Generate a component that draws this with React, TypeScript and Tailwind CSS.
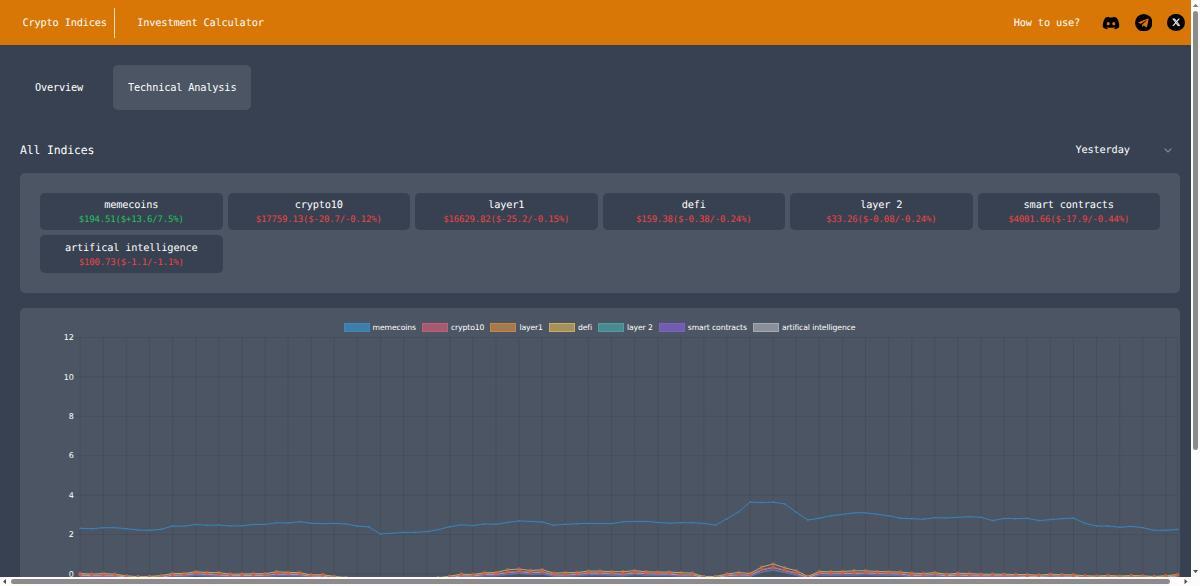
import React from "react";
import { FaDiscord, FaXTwitter } from "react-icons/fa6";

type Index = { name: string; value: string; up?: boolean };

const indices: Index[] = [
  { name: "memecoins", value: "$194.51($+13.6/7.5%)", up: true },
  { name: "crypto10", value: "$17759.13($-20.7/-0.12%)" },
  { name: "layer1", value: "$16629.82($-25.2/-0.15%)" },
  { name: "defi", value: "$159.38($-0.38/-0.24%)" },
  { name: "layer 2", value: "$33.26($-0.08/-0.24%)" },
  { name: "smart contracts", value: "$4001.66($-17.9/-0.44%)" },
  { name: "artifical intelligence", value: "$100.73($-1.1/-1.1%)" },
];

const legend = [
  { name: "memecoins", swatch: "bg-[#3f7dab] border-[#3f86bd]" },
  { name: "crypto10", swatch: "bg-[#a55a70] border-[#c25f78]" },
  { name: "layer1", swatch: "bg-[#a57a4f] border-[#c2854a]" },
  { name: "defi", swatch: "bg-[#a5925a] border-[#ccae5c]" },
  { name: "layer 2", swatch: "bg-[#4b8a91] border-[#4c9fa2]" },
  { name: "smart contracts", swatch: "bg-[#725cb0] border-[#7f60c9]" },
  { name: "artifical intelligence", swatch: "bg-[#8a9099] border-[#a5a9b0]" },
];

const X0 = 60.2;
const STEP = 11.55;
const TOP = 29.5;
const UNIT = 19.7;

// Vertical positions inside the chart, one sample every 15 minutes.
const memecoins = [
  220.3, 220.7, 219.7, 219.7, 220.7, 222, 222.3, 221.3, 218, 218.2, 216.5, 217.3, 217, 218, 217.8, 216.4, 216.4, 214.8,
  215, 213.7, 215.3, 215.7, 215.4, 216, 218, 219, 226, 225.3, 224.4, 224.3, 223.6, 221.6, 218.7, 216.8, 217.5, 216,
  216.3, 214.4, 212.9, 213.4, 214, 217.2, 216.3, 215.7, 215.4, 215.6, 215.6, 213.8, 213.4, 213.4, 214.4, 215.2, 214.7,
  214.7, 215.4, 217.2, 210.7, 204, 194.1, 194.6, 194.1, 196, 204.3, 212, 210.3, 207.7, 206.4, 204.8, 204.8, 206.3,
  207.7, 210.3, 210.7, 211.3, 209.7, 210, 209.3, 208.7, 209.3, 212.6, 210.4, 210.7, 210.3, 212.6, 211.6, 210.7, 210.1,
  215.3, 218, 218, 219.3, 218.4, 219.7, 222.3, 222.3, 221.4,
];
const upper = [
  265, 265.6, 265, 265.7, 267.3, 268.2, 268, 267, 265, 265, 263.3, 264, 264.2, 265.6, 265.5, 265.2, 265.2, 263.3, 263.9,
  264.2, 266.3, 266.2, 267.9, 269, 270, 271, 272, 272, 272, 271.5, 270.3, 269.3, 267.6, 265.7, 266, 264.3, 264, 261.3,
  260.6, 262, 261.3, 264.6, 264.2, 264, 262.6, 262.6, 263.2, 263.2, 262.2, 263.3, 263.6, 263.6, 264.2, 264.6, 268, 268,
  265.5, 264, 265, 258.6, 255.5, 259.3, 262.3, 267.8, 263, 263.3, 263, 262.3, 262.3, 263, 263.3, 263.6, 264.7, 265,
  264.2, 265.7, 264.8, 265, 265.7, 265.7, 265.7, 266, 266, 266.6, 265.7, 266.2, 266.3, 267.2, 267.6, 267, 267.6, 267,
  267.3, 268, 267.2, 266,
].map((v) => v + 0.5);
const shift = (values: number[], d: number, k: number) =>
  values.map((v, i) => v + d + Math.max(0, 268 - v) * k + (i % 5 === 2 ? 0.5 : 0));

const points = (values: number[]) => values.map((v, i) => `${(X0 + i * STEP).toFixed(1)},${v.toFixed(1)}`).join(" ");

function Chart() {
  const lower = shift(upper, 0.3, 0.24);
  return (
    <svg width="1160" height="269" viewBox="0 0 1160 269" className="block">
      <g stroke="#000" strokeOpacity="0.1" strokeWidth="0.8">
        {Array.from({ length: 48 }, (_, i) => (
          <line key={i} x1={X0 + i * STEP * 2} x2={X0 + i * STEP * 2} y1={TOP} y2="269" />
        ))}
        <line x1="1157.5" x2="1157.5" y1={TOP} y2="269" />
        {Array.from({ length: 7 }, (_, i) => (
          <line key={i} x1="55" x2="1157.5" y1={TOP + i * UNIT * 2} y2={TOP + i * UNIT * 2} />
        ))}
      </g>
      <g
        fill="#fff"
        fontSize="8"
        fontFamily="DejaVu Sans, sans-serif"
        textAnchor="end"
        textRendering="geometricPrecision"
      >
        {[12, 10, 8, 6, 4, 2, 0].map((n, i) => (
          <text key={n} x="53.7" y={TOP + 2.6 + i * UNIT * 2}>
            {n}
          </text>
        ))}
      </g>
      <g fill="none" strokeLinejoin="round" strokeWidth="1">
        <polyline points={points(shift(upper, 2.4, 0.32))} stroke="#4c9fa2" strokeOpacity="0.6" />
        <polyline points={points(shift(upper, 1.9, 0.3))} stroke="#7d63c6" />
        <polyline points={points(shift(upper, 1.1, 0.2))} stroke="#c9ccd2" strokeOpacity="0.8" />
        <polyline points={points(lower)} stroke="#c9605f" />
        <polyline points={points(upper)} stroke="#c4ab66" />
        <polyline points={points(memecoins)} stroke="#3a84bd" />
      </g>
      <g fill="#b8604c" stroke="#dc5a45" strokeOpacity="0.85" strokeWidth="0.6">
        {lower.map((v, i) => (
          <circle key={i} cx={X0 + i * STEP} cy={v} r="1.5" />
        ))}
      </g>
      <g fill="none" stroke="#d0784a" strokeWidth="0.6">
        {upper.map((v, i) => (
          <circle key={i} cx={X0 + i * STEP} cy={v} r="1.4" />
        ))}
      </g>
      <g fill="#3a7cb0">
        {memecoins.map((v, i) => (
          <circle key={i} cx={X0 + i * STEP} cy={v} r="1" />
        ))}
      </g>
    </svg>
  );
}

function TelegramIcon() {
  return (
    <svg width="17.5" height="17.5" viewBox="0 0 24 24" className="ml-[15px]">
      <circle cx="12" cy="12" r="12" fill="#000" />
      <path
        fill="#d97706"
        d="M17.9 6.2 4.9 11.3c-.8.3-.8.9-.1 1.1l3.3 1 7.4-4.7c.4-.2.7-.1.4.2l-6 5.5-.3 3.3c.4 0 .5-.2.8-.4l1.6-1.6 3.3 2.4c.6.4 1.1.2 1.2-.5l2.2-10.3c.2-.9-.3-1.4-.8-1.1Z"
      />
    </svg>
  );
}

function Header() {
  return (
    <header className="flex h-[45px] shrink-0 items-center bg-[#d97706] pl-[22.5px] pr-[6px]">
      <a className="flex h-[30px] items-center border-r border-[#f9e4cc] pr-[7.5px] pt-px">Crypto Indices</a>
      <a className="ml-[22px] pt-px">Investment Calculator</a>
      <nav className="ml-auto flex items-center">
        <a className="mr-[21.5px] pt-px">How to use?</a>
        <FaDiscord className="h-[18px] w-[18px] text-black" />
        <TelegramIcon />
        <span className="ml-[15px] flex h-[17.5px] w-[17.5px] items-center justify-center rounded-full bg-black">
          <FaXTwitter className="h-[8.5px] w-[8.5px] stroke-white stroke-[20] text-white" />
        </span>
      </nav>
    </header>
  );
}

export default function App() {
  return (
    <div className="grid h-[586px] w-[1200px] grid-cols-[1190.5px_9.5px] grid-rows-[576.5px_9.5px] overflow-hidden bg-[#fcfcfc] font-['DejaVu_Sans_Mono',monospace] text-[10.3px] tracking-[-0.18px] leading-[15px] text-white [text-rendering:geometricPrecision]">
      <div className="flex flex-col overflow-hidden bg-[#374151]">
        <Header />
        <div className="flex shrink-0 px-5 pt-5">
          <button className="h-[45px] w-[78px]">Overview</button>
          <button className="ml-[15px] h-[45px] w-[138px] rounded-[5px] bg-[#4b5563] pl-[0.5px]">Technical Analysis</button>
        </div>
        <div className="mt-[30px] flex h-[20px] w-[1180px] shrink-0 items-center justify-between pl-5">
          <h1 className="text-[11.5px]">All Indices</h1>
          <div className="flex w-[104.5px] items-center justify-between pr-[8.5px]">
            <span>Yesterday</span>
            <svg width="8" height="5" viewBox="0 0 8 5" fill="none" stroke="#868d98" strokeWidth="1.1">
              <path d="M0.6 0.6 4 4 7.4 0.6" />
            </svg>
          </div>
        </div>
        <section className="mx-5 mt-[12.5px] grid h-[120px] w-[1160px] shrink-0 grid-cols-6 content-start gap-[5px] rounded-[5px] bg-[#4b5563] p-5">
          {indices.map((item) => (
            <div key={item.name} className="flex h-[37.5px] flex-col items-center rounded-[5px] bg-[#374151] pt-[5.5px]">
              <span className="leading-[15px]">{item.name}</span>
              <span
                className={
                  item.up
                    ? "text-[9px] tracking-[-0.16px] leading-[14px] text-[#22c55e]"
                    : "text-[9px] tracking-[-0.16px] leading-[14px] text-[#ef4444]"
                }
              >
                {item.value}
              </span>
            </div>
          ))}
        </section>
        <section className="mx-5 mt-[15px] h-[400px] w-[1160px] shrink-0 rounded-t-[5px] bg-[#4b5563]">
          <div className="-mb-[29px] flex h-[29px] justify-center gap-[6px] pt-[15px] pr-[1px] font-['DejaVu_Sans',sans-serif] text-[7.7px] tracking-[-0.11px] leading-[9px]">
            {legend.map((l) => (
              <div key={l.name} className="flex h-[9px] items-center gap-[3px]">
                <span className={`h-[9px] w-[26px] border ${l.swatch}`} />
                <span>{l.name}</span>
              </div>
            ))}
          </div>
          <Chart />
        </section>
      </div>
      <div className="flex flex-col items-center">
        <svg width="9" height="11" viewBox="0 0 9 11" className="shrink-0">
          <path d="M1.8 7 4.6 3.8 7.4 7Z" fill="#808080" />
        </svg>
        <div className="h-[439px] w-[5.5px] rounded-full bg-[#8b8b8b]" />
        <svg width="9" height="11" viewBox="0 0 9 11" className="mt-auto shrink-0">
          <path d="M2 4 4.6 7 7.2 4Z" fill="#505050" />
        </svg>
      </div>
      <div className="flex items-center">
        <svg width="11" height="9" viewBox="0 0 11 9" className="shrink-0">
          <path d="M6 2 3 4.6 6 7.2Z" fill="#505050" />
        </svg>
        <div className="h-[5.5px] w-[1159px] rounded-full bg-[#8b8b8b]" />
        <svg width="11" height="9" viewBox="0 0 11 9" className="ml-auto shrink-0">
          <path d="M4.5 2 7.5 4.6 4.5 7.2Z" fill="#505050" />
        </svg>
      </div>
    </div>
  );
}
